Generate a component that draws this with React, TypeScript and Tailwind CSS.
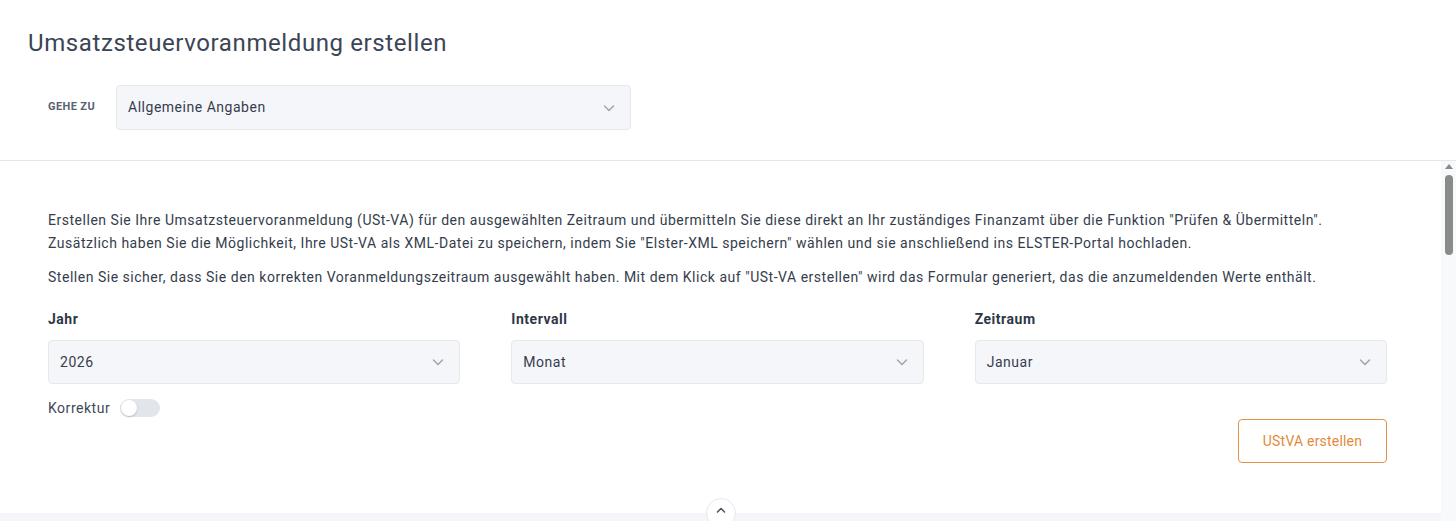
import React from "react";

const Chevron = ({ className = "" }: { className?: string }) => (
  <svg viewBox="0 0 16 16" className={className} fill="none" stroke="currentColor" strokeWidth="1.6" strokeLinecap="round" strokeLinejoin="round">
    <path d="M3.5 6l4.5 4.5L12.5 6" />
  </svg>
);

const Select = ({ value, className = "" }: { value: string; className?: string }) => (
  <div className={`flex items-center justify-between rounded-[4px] border border-[#e6e8ee] bg-[#f5f6fa] pl-[11px] pr-[13px] text-[14px] text-[#353d4c] ${className}`}>
    <span>{value}</span>
    <Chevron className="h-[16px] w-[16px] text-[#a2a7b0]" />
  </div>
);

export default function App() {
  return (
    <div className="flex h-[521px] w-[1456px] flex-col overflow-hidden bg-white tracking-[0.52px] text-[#353d4c]" style={{ fontFamily: "Roboto, 'Liberation Sans', sans-serif" }}>
      <header className="h-[161px] shrink-0 border-b border-[#e4e6ea]">
        <h1 className="pl-[28px] pt-[27px] text-[24px] leading-[32px] tracking-[0.6px] text-[#3b4556]">Umsatzsteuervoranmeldung erstellen</h1>
        <div className="mt-[26px] flex items-center pl-[48px]">
          <span className="w-[68px] text-[11px] font-bold tracking-[0.4px] text-[#5a6270]">GEHE ZU</span>
          <Select value="Allgemeine Angaben" className="h-[45px] w-[515px]" />
        </div>
      </header>
      <div className="flex min-h-0 flex-1">
        <div className="flex min-w-0 flex-1 flex-col">
          <main className="flex-1 pl-[48px] pr-[54px] pt-[48px]">
            <p className="text-[14px] leading-[23px] text-[#353d4c]">
              Erstellen Sie Ihre Umsatzsteuervoranmeldung (USt-VA) für den ausgewählten Zeitraum und übermitteln Sie diese direkt an Ihr zuständiges Finanzamt über die Funktion "Prüfen &amp; Übermitteln".
              <br />
              Zusätzlich haben Sie die Möglichkeit, Ihre USt-VA als XML-Datei zu speichern, indem Sie "Elster-XML speichern" wählen und sie anschließend ins ELSTER-Portal hochladen.
            </p>
            <p className="mt-[11px] text-[14px] leading-[23px] text-[#353d4c]">
              Stellen Sie sicher, dass Sie den korrekten Voranmeldungszeitraum ausgewählt haben. Mit dem Klick auf "USt-VA erstellen" wird das Formular generiert, das die anzumeldenden Werte enthält.
            </p>
            <div className="mt-[20px] grid grid-cols-3 gap-x-[51px]">
              {[
                ["Jahr", "2026"],
                ["Intervall", "Monat"],
                ["Zeitraum", "Januar"],
              ].map(([label, value]) => (
                <div key={label} className="flex flex-col">
                  <span className="text-[14px] font-bold leading-[20px] text-[#2f3746]">{label}</span>
                  <Select value={value} className="mt-[11px] h-[44px]" />
                </div>
              ))}
            </div>
            <div className="mt-[15px] flex items-center gap-[10px]">
              <span className="text-[14px] leading-[18px] text-[#404858]">Korrektur</span>
              <div className="flex h-[18px] w-[40px] items-center rounded-full bg-[#e2e5ec] px-[1px]">
                <div className="h-[16px] w-[16px] rounded-full bg-white shadow-[0_1px_2px_rgba(0,0,0,0.2)]" />
              </div>
            </div>
            <div className="mt-[2px] flex justify-end">
              <button className="h-[44px] w-[149px] rounded-[4px] border border-[#e39347] bg-white text-[14px] tracking-[0.2px] text-[#e38a3c]">UStVA erstellen</button>
            </div>
          </main>
          <div className="relative h-[8px] shrink-0 bg-[#f5f6f9]">
            <div className="absolute left-1/2 top-[-15px] flex h-[30px] w-[30px] -translate-x-1/2 items-start justify-center rounded-full border border-[#e6e8ee] bg-white pt-[8px]">
              <svg viewBox="0 0 10 6" className="h-[6px] w-[10px]" fill="none" stroke="#4a5668" strokeWidth="1.6" strokeLinecap="round" strokeLinejoin="round">
                <path d="M1.5 5L5 1.5 8.5 5" />
              </svg>
            </div>
          </div>
        </div>
        <div className="flex w-[15px] shrink-0 flex-col items-center bg-[#f8f9fb] pt-[3px]">
          <svg viewBox="0 0 8 5" className="h-[5px] w-[8px]">
            <path d="M4 0L8 5H0z" fill="#8a8a8a" />
          </svg>
          <div className="mt-[6px] h-[80px] w-[8px] rounded-full bg-[#8a8a8a]" />
        </div>
      </div>
    </div>
  );
}
